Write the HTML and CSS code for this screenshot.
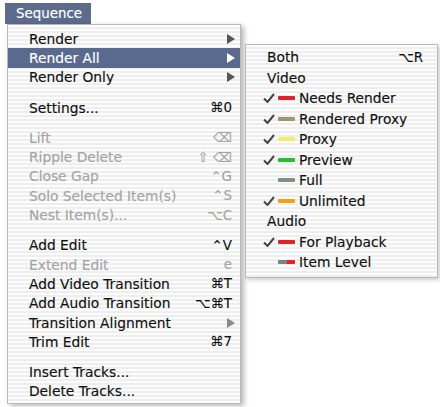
FILE: index.html
```html
<!DOCTYPE html>
<html>
<head>
<meta charset="utf-8">
<link rel="stylesheet" href="styles.css">
</head>
<body>
<div class="screen">
  <div class="title">Sequence</div>
  <div class="menu main">
    <div class="group">
      <div class="row"><span class="label">Render</span><span class="arrow"></span></div>
      <div class="row hl"><span class="label">Render All</span><span class="arrow"></span></div>
      <div class="row"><span class="label">Render Only</span><span class="arrow"></span></div>
    </div>
    <div class="group">
      <div class="row"><span class="label">Settings...</span><span class="key">⌘0</span></div>
    </div>
    <div class="group">
      <div class="row dis"><span class="label">Lift</span><span class="key">⌫</span></div>
      <div class="row dis"><span class="label">Ripple Delete</span><span class="key">⇧ ⌫</span></div>
      <div class="row dis"><span class="label">Close Gap</span><span class="key">⌃G</span></div>
      <div class="row dis"><span class="label">Solo Selected Item(s)</span><span class="key">⌃S</span></div>
      <div class="row dis"><span class="label">Nest Item(s)...</span><span class="key">⌥C</span></div>
    </div>
    <div class="group">
      <div class="row"><span class="label">Add Edit</span><span class="key">⌃V</span></div>
      <div class="row dis"><span class="label">Extend Edit</span><span class="key">e</span></div>
      <div class="row"><span class="label">Add Video Transition</span><span class="key">⌘T</span></div>
      <div class="row"><span class="label">Add Audio Transition</span><span class="key">⌥⌘T</span></div>
      <div class="row"><span class="label">Transition Alignment</span><span class="arrow light"></span></div>
      <div class="row"><span class="label">Trim Edit</span><span class="key">⌘7</span></div>
    </div>
    <div class="group">
      <div class="row"><span class="label">Insert Tracks...</span></div>
      <div class="row"><span class="label">Delete Tracks...</span></div>
    </div>
  </div>
  <div class="menu sub">
    <div class="srow head"><span class="label">Both</span><span class="key">⌥R</span></div>
    <div class="srow head"><span class="label">Video</span></div>
    <div class="srow"><span class="check"><svg viewBox="0 0 12 10" width="12" height="10"><path d="M1 5.5 L4.5 9 L11 1" fill="none" stroke="#444" stroke-width="2"/></svg></span><span class="bar red"></span><span class="label">Needs Render</span></div>
    <div class="srow"><span class="check"><svg viewBox="0 0 12 10" width="12" height="10"><path d="M1 5.5 L4.5 9 L11 1" fill="none" stroke="#444" stroke-width="2"/></svg></span><span class="bar khaki"></span><span class="label">Rendered Proxy</span></div>
    <div class="srow"><span class="check"><svg viewBox="0 0 12 10" width="12" height="10"><path d="M1 5.5 L4.5 9 L11 1" fill="none" stroke="#444" stroke-width="2"/></svg></span><span class="bar yellow"></span><span class="label">Proxy</span></div>
    <div class="srow"><span class="check"><svg viewBox="0 0 12 10" width="12" height="10"><path d="M1 5.5 L4.5 9 L11 1" fill="none" stroke="#444" stroke-width="2"/></svg></span><span class="bar green"></span><span class="label">Preview</span></div>
    <div class="srow"><span class="check"></span><span class="bar grey"></span><span class="label">Full</span></div>
    <div class="srow"><span class="check"><svg viewBox="0 0 12 10" width="12" height="10"><path d="M1 5.5 L4.5 9 L11 1" fill="none" stroke="#444" stroke-width="2"/></svg></span><span class="bar orange"></span><span class="label">Unlimited</span></div>
    <div class="srow head"><span class="label">Audio</span></div>
    <div class="srow"><span class="check"><svg viewBox="0 0 12 10" width="12" height="10"><path d="M1 5.5 L4.5 9 L11 1" fill="none" stroke="#444" stroke-width="2"/></svg></span><span class="bar red"></span><span class="label">For Playback</span></div>
    <div class="srow"><span class="check"></span><span class="bar mixed"></span><span class="label">Item Level</span></div>
  </div>
</div>
</body>
</html>
```

FILE: styles.css
```css
html, body {
  margin: 0;
  padding: 0;
  background: #ffffff;
}

.screen {
  position: relative;
  width: 440px;
  height: 407px;
  overflow: hidden;
  font-family: "DejaVu Sans", "Liberation Sans", sans-serif;
  font-size: 13.8px;
  color: #111;
  -webkit-text-stroke: 0.15px currentColor;
}

.title {
  margin: 3px 0 0 5px;
  width: 86px;
  height: 21px;
  box-sizing: border-box;
  padding-left: 11px;
  line-height: 21px;
  background: #5d6b8d;
  color: #fff;
  font-size: 13.4px;
}

.menu {
  background-color: #fbfbfb;
  background-image: repeating-linear-gradient(to bottom, #fdfdfd 0px, #fdfdfd 2px, #eeeeee 2px, #eeeeee 4px);
  border: 1px solid #b9b9b9;
  box-sizing: border-box;
}

.main {
  margin-left: 7px;
  width: 234px;
  padding: 4px 0 2px;
  box-shadow: 3px 2px 5px rgba(0, 0, 0, 0.28);
  display: flex;
  flex-direction: column;
  gap: 11px;
}

.row {
  height: 19.3px;
  display: flex;
  align-items: center;
  justify-content: space-between;
  padding: 0 8px 0 21px;
}

.row.hl {
  background: #5a6a8e;
  color: #fff;
}

.row.dis {
  color: #a4a4a4;
}

.key {
  font-size: 13.4px;
}

.arrow {
  width: 0;
  height: 0;
  border-left: 8px solid #555;
  border-top: 5px solid transparent;
  border-bottom: 5px solid transparent;
  margin-right: -3px;
}

.row.hl .arrow {
  border-left-color: #fff;
}

.arrow.light {
  border-left-color: #8a8a8a;
}

.sub {
  position: absolute;
  left: 245px;
  top: 44px;
  width: 193px;
  padding: 2px 0 4px;
  box-shadow: 2px 2px 4px rgba(0, 0, 0, 0.2);
}

.srow {
  height: 20.5px;
  display: flex;
  align-items: center;
  padding: 0 14px 0 17px;
}

.srow.head .label {
  margin-left: 4px;
  flex: 1;
}

.check {
  width: 15px;
  height: 10px;
  display: flex;
  align-items: center;
}

.check svg {
  display: block;
}

.bar {
  width: 17px;
  height: 4px;
  margin-right: 4px;
  border-radius: 1px;
}

.red { background: #e3202b; }
.khaki { background: #9a9a72; }
.yellow { background: #f3ec6c; }
.green { background: #22c02e; }
.grey { background: #7f9180; }
.orange { background: #f0a122; }
.mixed { background: linear-gradient(to right, #7d847d 50%, #e3202b 50%); }
```
